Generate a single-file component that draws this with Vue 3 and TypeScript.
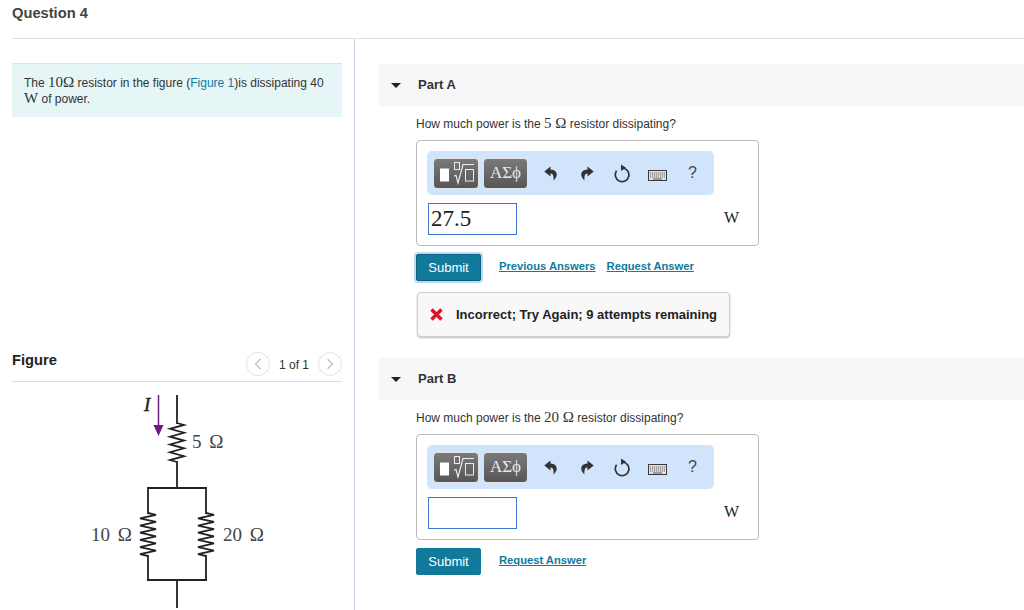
<script setup lang="ts">
interface Part {
  name: string;
  value: number;
  answer: string;
  previous: boolean;
  feedback: boolean;
}
const parts: Part[] = [
  { name: "Part A", value: 5, answer: "27.5", previous: true, feedback: true },
  { name: "Part B", value: 20, answer: "", previous: false, feedback: false },
];
const zig = (x: number, y1: number, y2: number, n: number, w = 7): string => {
  const step = (y2 - y1) / (n * 2);
  let d = `M${x} ${y1}`;
  for (let i = 0; i < n * 2; i++) {
    d += ` L${i % 2 === 0 ? x + w : x - w} ${y1 + step * (i + 0.5)}`;
  }
  return d + ` L${x} ${y2}`;
};
</script>

<template>
  <div class="page">
    <header class="top">Question 4</header>
    <div class="body">
      <section class="left">
        <div class="intro">
          The <span class="math">10Ω</span> resistor in the figure (<a class="flink">Figure 1</a>)is dissipating 40
          <span class="math">W</span> of power.
        </div>
        <div class="fig-head">
          <h2 class="fig-title">Figure</h2>
          <div class="pager">
            <span class="circle">
              <svg width="8" height="12" viewBox="0 0 8 12"><path d="M6.500 1 L1.500 6 L6.500 11" class="chev" /></svg>
            </span>
            <span class="count">1 of 1</span>
            <span class="circle">
              <svg width="8" height="12" viewBox="0 0 8 12"><path d="M1.500 1 L6.500 6 L1.500 11" class="chev" /></svg>
            </span>
          </div>
        </div>
        <svg class="circuit" width="330" height="228" viewBox="12 382 330 228">
          <g class="wire">
            <path d="M177 395 L177 424 M177 461 L177 488" />
            <path :d="zig(177, 423, 462, 5, 7)" />
            <path d="M147 488 L207 488 M148 488 L148 514 M206 488 L206 514 M148 555 L148 580 M206 555 L206 580 M147 580 L207 580 M177 580 L177 608" />
            <path :d="zig(148, 513, 556, 6, 8)" />
            <path :d="zig(206, 513, 556, 6, 8)" />
          </g>
          <path d="M158.500 395 L158.500 428" stroke="#6a1b86" stroke-width="1.500" fill="none" />
          <path d="M153.500 425 L163.500 425 L158.500 436 Z" fill="#6a1b86" />
          <text x="144" y="411" class="lbl ital">I</text>
          <text x="192" y="448" class="lbl">5 Ω</text>
          <text x="91" y="541" class="lbl">10 Ω</text>
          <text x="223" y="541" class="lbl">20 Ω</text>
        </svg>
      </section>
      <main class="right">
        <section v-for="p in parts" :key="p.name" class="part">
          <div class="part-head">
            <span class="tri"></span>
            <span class="part-name">{{ p.name }}</span>
          </div>
          <div class="part-body">
            <p class="question">How much power is the <span class="math">{{ p.value }} Ω</span> resistor dissipating?</p>
            <div class="answer-box">
              <div class="toolbar">
                <button class="tool tool-math">
                  <svg width="44" height="30" viewBox="0 0 44 30">
                    <rect x="6" y="10.500" width="9" height="13" fill="#fff" />
                    <rect x="20.500" y="4.500" width="5" height="7" fill="none" stroke="#ececec" />
                    <path d="M20 18 L22 17.500 L24 25 L29 6.500 L40 6.500" fill="none" stroke="#ececec" stroke-width="1.200" />
                    <rect x="31.500" y="11.500" width="8" height="11.500" fill="none" stroke="#ececec" />
                  </svg>
                </button>
                <button class="tool tool-sym">ΑΣϕ</button>
                <div class="actions">
                  <svg class="act" width="14" height="15" viewBox="0 0 14 15">
                    <path d="M6.500 0.500 L0.300 5.500 L6.500 10.500 L6.500 7.600 C9 7.600 9.800 9.800 9.600 14.500 C14.500 10 13.800 3.800 6.500 3.400 Z" fill="#333" />
                  </svg>
                  <svg class="act" width="14" height="15" viewBox="0 0 14 15">
                    <path d="M7.500 0.500 L13.700 5.500 L7.500 10.500 L7.500 7.600 C5 7.600 4.200 9.800 4.400 14.500 C-0.500 10 0.200 3.800 7.500 3.400 Z" fill="#333" />
                  </svg>
                  <svg class="act reload" width="18" height="19" viewBox="0 0 18 19">
                    <path d="M9.500 4 A6.800 6.800 0 1 1 3.600 6.800" fill="none" stroke="#333" stroke-width="1.700" />
                    <path d="M8 0.500 L13 3.800 L8 7 Z" fill="#333" />
                  </svg>
                  <svg class="act kbd" width="19" height="11" viewBox="0 0 19 11">
                    <rect x="0.500" y="0.500" width="18" height="10" fill="#dfe3e8" stroke="#3a3a3a" />
                    <path d="M2 3 H17 M2 5 H17 M2 7 H17" stroke="#666" stroke-width="1" stroke-dasharray="1.200 0.800" />
                    <path d="M5 9 H14" stroke="#555" />
                  </svg>
                  <span class="help">?</span>
                </div>
              </div>
              <div class="entry">
                <div class="input">{{ p.answer }}</div>
                <span class="unit">W</span>
              </div>
            </div>
            <div class="controls">
              <button class="submit" :class="{ focused: p.previous }">Submit</button>
              <a v-if="p.previous" class="link">Previous Answers</a>
              <a class="link">Request Answer</a>
            </div>
            <div v-if="p.feedback" class="feedback">
              <svg width="13" height="13" viewBox="0 0 13 13">
                <path d="M1.500 1.500 L11.500 11.500 M11.500 1.500 L1.500 11.500" stroke="#d8122f" stroke-width="3.400" />
              </svg>
              <span>Incorrect; Try Again; 9 attempts remaining</span>
            </div>
          </div>
        </section>
      </main>
    </div>
  </div>
</template>

<style scoped>
.page {
  width: 1024px;
  height: 610px;
  overflow: hidden;
  background: #fff;
  font-family: "Liberation Sans", Arial, sans-serif;
  font-size: 12px;
  color: #333;
  display: flex;
  flex-direction: column;
}
.top {
  margin-left: 12px;
  padding-top: 5px;
  box-sizing: border-box;
  border-bottom: 1px solid #dfe1e6;
  height: 39px;
  font-size: 14.700px;
  line-height: 16px;
  font-weight: 700;
  color: #444;
}
.body {
  flex: 1;
  display: flex;
  min-height: 0;
}
.left {
  width: 330px;
  margin-left: 12px;
  margin-right: 12px;
  flex: none;
}
.intro {
  margin-top: 24px;
  height: 54px;
  box-sizing: border-box;
  border-top: 1px solid #d9e3e8;
  background: #e6f6f7;
  padding: 11px 12px 0;
  line-height: 15px;
}
.math {
  font-family: "Liberation Serif", "Times New Roman", serif;
  font-size: 15px;
}
.flink {
  color: #0f7a9b;
}
.fig-head {
  margin-top: 228px;
  height: 37px;
  box-sizing: border-box;
  border-bottom: 1px solid #dcdde0;
  display: flex;
  justify-content: space-between;
}
.fig-title {
  margin: 7px 0 0;
  font-size: 14.700px;
  line-height: 16px;
  font-weight: 700;
  color: #222;
}
.pager {
  display: flex;
  align-items: flex-start;
  margin-top: 7px;
}
.circle {
  width: 24px;
  height: 24px;
  box-sizing: border-box;
  border: 1px solid #e2e2e2;
  border-radius: 50%;
  display: flex;
  align-items: center;
  justify-content: center;
}
.chev {
  fill: none;
  stroke: #bdbdbd;
  stroke-width: 1.200;
}
.count {
  width: 48px;
  text-align: center;
  line-height: 26px;
  color: #333;
}
.circuit {
  display: block;
}
.wire {
  fill: none;
  stroke: #222;
  stroke-width: 1.800;
  stroke-linejoin: miter;
}
.lbl {
  font-family: "Liberation Serif", "Times New Roman", serif;
  font-size: 19px;
  word-spacing: 3px;
  fill: #444;
}
.ital {
  font-style: italic;
  fill: #222;
  stroke: #222;
  stroke-width: 0.400;
}
.right {
  flex: 1;
  min-width: 0;
  border-left: 1px solid #c7d0e0;
  padding-left: 24px;
  padding-top: 25px;
}
.part {
  height: 294px;
}
.part-head {
  height: 42px;
  background: #f7f7f7;
  display: flex;
  align-items: center;
}
.tri {
  margin-left: 12px;
  width: 0;
  height: 0;
  border-left: 5px solid transparent;
  border-right: 5px solid transparent;
  border-top: 5px solid #222;
}
.part-name {
  margin-left: 17px;
  font-size: 13px;
  font-weight: 700;
  color: #333;
  line-height: 18px;
}
.part-body {
  padding-left: 37px;
}
.question {
  margin: 9px 0 0;
  height: 25px;
  line-height: 16px;
}
.answer-box {
  width: 343px;
  height: 106px;
  box-sizing: border-box;
  border: 1px solid #bbb;
  border-radius: 4px;
  padding: 10px;
}
.toolbar {
  width: 287px;
  height: 44px;
  box-sizing: border-box;
  background: #d0e4fb;
  border-radius: 5px;
  display: flex;
  align-items: center;
  padding-left: 6px;
  gap: 4px;
}
.tool {
  height: 31px;
  box-sizing: border-box;
  border: 1px solid #e4e4e4;
  border-radius: 4px;
  background: linear-gradient(#7a7a7a, #565656);
  padding: 0;
  display: flex;
  align-items: center;
  justify-content: center;
  color: #e8e8e8;
}
.tool-math {
  width: 46px;
}
.tool-sym {
  width: 45px;
  font-family: "Liberation Serif", "Times New Roman", serif;
  font-size: 17px;
}
.actions {
  display: flex;
  align-items: center;
  margin-left: 12px;
  color: #333;
}
.act {
  display: block;
  flex: none;
}
.act + .act {
  margin-left: 22px;
}
.reload {
  margin-top: 1px;
  margin-left: 19px !important;
}
.kbd {
  margin-top: 4px;
  margin-left: 17px !important;
}
.help {
  margin-left: 21px;
  font-size: 16px;
  color: #444;
}
.entry {
  display: flex;
  align-items: center;
  justify-content: space-between;
  margin-top: 8px;
  padding-left: 1px;
  padding-right: 9px;
}
.input {
  width: 89px;
  height: 32px;
  box-sizing: border-box;
  border: 1px solid #3e76d2;
  padding-left: 2px;
  font-family: "Liberation Serif", "Times New Roman", serif;
  font-size: 23px;
  line-height: 29px;
  color: #222;
}
.unit {
  font-family: "Liberation Serif", "Times New Roman", serif;
  font-size: 16px;
  margin-top: -2px;
  color: #222;
}
.controls {
  display: flex;
  align-items: center;
  height: 28px;
  margin-top: 7px;
}
.submit {
  width: 65px;
  height: 27px;
  padding: 0;
  border: 1px solid #117a9a;
  border-radius: 2px;
  background: #117a9a;
  color: #fff;
  font-family: "Liberation Sans", Arial, sans-serif;
  font-size: 13px;
  margin-right: 18px;
}
.submit.focused {
  border-color: #0e5f7a;
  box-shadow: 0 0 0 2px #bcdcf5;
}
.link {
  font-size: 11.200px;
  font-weight: 700;
  color: #0f7a9b;
  text-decoration: underline;
  margin-right: 11px;
  margin-top: -2px;
}
.feedback {
  width: 313px;
  height: 45px;
  box-sizing: border-box;
  margin-top: 11px;
  margin-left: 1px;
  border: 1px solid #d0d0d0;
  border-radius: 4px;
  background: #f8f8f8;
  box-shadow: 0 1px 2px #bbb;
  display: flex;
  align-items: center;
  padding-left: 12px;
  gap: 13px;
  font-size: 13px;
  line-height: 17px;
  font-weight: 700;
  color: #222;
}
</style>
